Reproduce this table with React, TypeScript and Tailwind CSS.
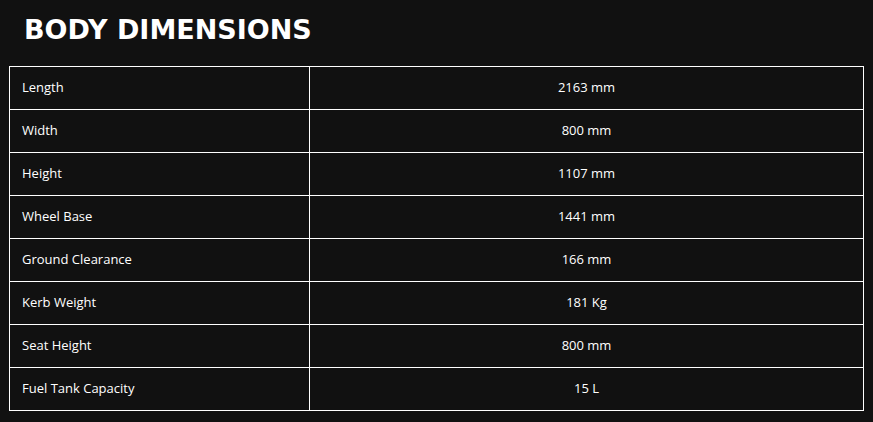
const rows: [string, string][] = [
  ['Length', '2163 mm'],
  ['Width', '800 mm'],
  ['Height', '1107 mm'],
  ['Wheel Base', '1441 mm'],
  ['Ground Clearance', '166 mm'],
  ['Kerb Weight', '181 Kg'],
  ['Seat Height', '800 mm'],
  ['Fuel Tank Capacity', '15 L'],
];

export default function App() {
  return (
    <div className="min-h-screen w-full bg-[#111111] text-white font-['Open_Sans',sans-serif]">
      <h2 className="pl-6 pt-[12px] h-[66px] text-[27px] font-extrabold leading-[36px] font-['DejaVu_Sans',sans-serif]">
        BODY DIMENSIONS
      </h2>
      <div className="px-[9px]">
        <table className="w-[855px] border-collapse text-[13px]">
          <tbody>
            {rows.map(([label, value]) => (
              <tr key={label} className="h-[43px]">
                <td className="w-[300px] border border-white pl-3">{label}</td>
                <td className="border border-white text-center">{value}</td>
              </tr>
            ))}
          </tbody>
        </table>
      </div>
    </div>
  );
}
